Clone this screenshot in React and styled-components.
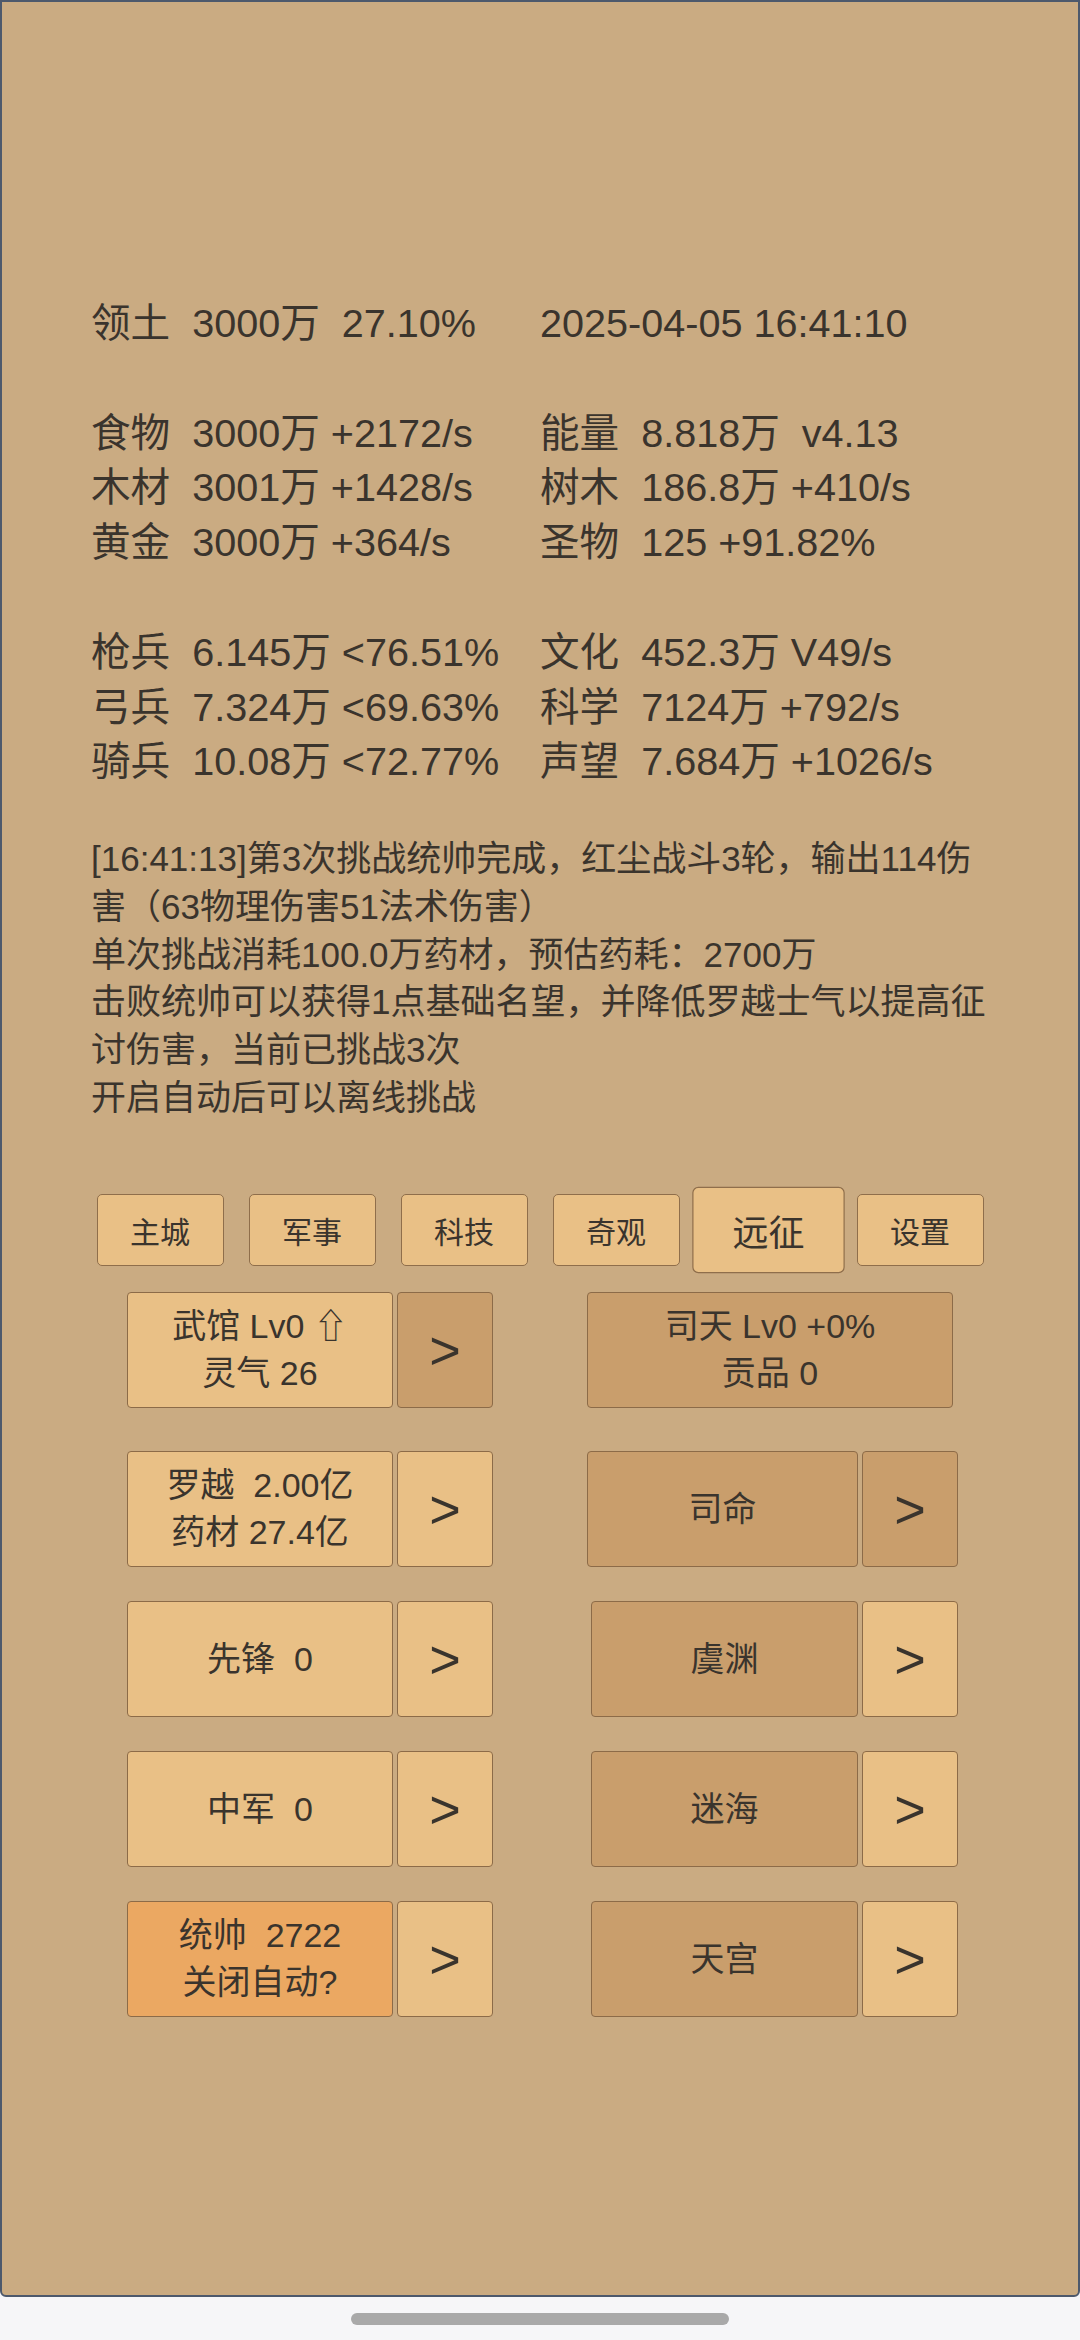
import styled, { createGlobalStyle } from "styled-components";

const Global = createGlobalStyle`
  html, body {
    margin: 0;
    padding: 0;
    background: #f6f6f8;
  }
  * { box-sizing: border-box; }
`;

const stats = [
  [["领土  3000万  27.10%", "2025-04-05 16:41:10"]],
  [
    ["食物  3000万 +2172/s", "能量  8.818万  v4.13"],
    ["木材  3001万 +1428/s", "树木  186.8万 +410/s"],
    ["黄金  3000万 +364/s", "圣物  125 +91.82%"],
  ],
  [
    ["枪兵  6.145万 <76.51%", "文化  452.3万 V49/s"],
    ["弓兵  7.324万 <69.63%", "科学  7124万 +792/s"],
    ["骑兵  10.08万 <72.77%", "声望  7.684万 +1026/s"],
  ],
];

const logLines = [
  "[16:41:13]第3次挑战统帅完成，红尘战斗3轮，输出114伤害（63物理伤害51法术伤害）",
  "单次挑战消耗100.0万药材，预估药耗：2700万",
  "击败统帅可以获得1点基础名望，并降低罗越士气以提高征讨伤害，当前已挑战3次",
  "开启自动后可以离线挑战",
];

const tabs = ["主城", "军事", "科技", "奇观", "远征", "设置"];

const rows = [
  {
    gap: 26,
    left: { lines: ["武馆 Lv0 ⇧", "灵气 26"], tone: "light", arrow: "dark" },
    right: { lines: ["司天 Lv0 +0%", "贡品 0"], tone: "dark", width: 366 },
  },
  {
    gap: 43,
    left: { lines: ["罗越  2.00亿", "药材 27.4亿"], tone: "light", arrow: "light" },
    right: { lines: ["司命"], tone: "dark", width: 271, arrow: "dark" },
  },
  {
    gap: 34,
    left: { lines: ["先锋  0"], tone: "light", arrow: "light" },
    right: { lines: ["虞渊"], tone: "dark", width: 267, arrow: "light" },
  },
  {
    gap: 34,
    left: { lines: ["中军  0"], tone: "light", arrow: "light" },
    right: { lines: ["迷海"], tone: "dark", width: 267, arrow: "light" },
  },
  {
    gap: 34,
    left: { lines: ["统帅  2722", "关闭自动?"], tone: "orange", arrow: "light" },
    right: { lines: ["天宫"], tone: "dark", width: 267, arrow: "light" },
  },
];

export default function App() {
  return (
    <>
      <Global />
      <Frame>
        <Stats>
          {stats.map((group, gi) => (
            <StatGroup key={gi} $first={gi === 0}>
              {group.map(([a, b], i) => (
                <StatRow key={i}>
                  <span>{a}</span>
                  <span>{b}</span>
                </StatRow>
              ))}
            </StatGroup>
          ))}
        </Stats>

        <Log>
          {logLines.map((l, i) => (
            <p key={i}>{l}</p>
          ))}
        </Log>

        <Tabs>
          {tabs.map((t) => (
            <Tab key={t} $active={t === "远征"}>
              {t}
            </Tab>
          ))}
        </Tabs>

        {rows.map((r, i) => (
          <BigRow key={i} $gap={r.gap}>
            <Group>
              <MainBtn $tone={r.left.tone} $w={266}>
                {r.left.lines.map((l) => (
                  <span key={l}>{l}</span>
                ))}
              </MainBtn>
              <ArrowBtn $tone={r.left.arrow}>&gt;</ArrowBtn>
            </Group>
            <RightGroup $alone={!r.right.arrow}>
              <MainBtn $tone={r.right.tone} $w={r.right.width}>
                {r.right.lines.map((l) => (
                  <span key={l}>{l}</span>
                ))}
              </MainBtn>
              {r.right.arrow && <ArrowBtn $tone={r.right.arrow}>&gt;</ArrowBtn>}
            </RightGroup>
          </BigRow>
        ))}
      </Frame>
      <HomeBar />
    </>
  );
}

const tones = {
  light: "#e9c086",
  dark: "#c99e6c",
  orange: "#eba862",
};

const Frame = styled.div`
  width: 1080px;
  height: 2297px;
  background: #caab82;
  border: 2px solid #4d596c;
  border-radius: 0 0 6px 6px;
  padding: 294px 89px 0;
  font-family: "Liberation Sans", "Noto Sans CJK SC", sans-serif;
  color: #3a342d;
  display: flex;
  flex-direction: column;
`;

const Stats = styled.div`
  font-size: 39.6px;
  line-height: 54.8px;
`;

const StatGroup = styled.div`
  margin-top: ${(p) => (p.$first ? 0 : 54.8)}px;
`;

const StatRow = styled.div`
  display: grid;
  grid-template-columns: 449px 1fr;
  white-space: pre;
`;

const Log = styled.div`
  margin: 46px -12px 0 0;
  font-size: 35px;
  line-height: 47.7px;

  p {
    margin: 0;
  }
`;

const Tabs = styled.div`
  margin-top: 73px;
  display: flex;
  justify-content: center;
  gap: 25px;
`;

const Tab = styled.div`
  width: 127px;
  height: 72px;
  display: flex;
  align-items: center;
  justify-content: center;
  background: #e9c086;
  border: 1.5px solid #8f6e4b;
  border-radius: 5px;
  font-size: 30px;
  transform: ${(p) => (p.$active ? "scale(1.2)" : "none")};
`;

const BigRow = styled.div`
  margin-top: ${(p) => p.$gap}px;
  padding-left: 36px;
  display: flex;
  gap: 94px;
`;

const Group = styled.div`
  display: flex;
  gap: 4px;
  width: 366px;
`;

const RightGroup = styled(Group)`
  width: 371px;
  justify-content: ${(p) => (p.$alone ? "flex-start" : "flex-end")};
`;

const MainBtn = styled.div`
  width: ${(p) => p.$w}px;
  height: 116px;
  display: flex;
  flex-direction: column;
  align-items: center;
  justify-content: center;
  background: ${(p) => tones[p.$tone]};
  border: 1.5px solid #8c6b48;
  border-radius: 4px;
  font-size: 34px;
  line-height: 47.6px;
  white-space: pre;
`;

const ArrowBtn = styled.div`
  width: 96px;
  height: 116px;
  display: flex;
  align-items: center;
  justify-content: center;
  background: ${(p) => tones[p.$tone]};
  border: 1.5px solid #8c6b48;
  border-radius: 4px;
  font-size: 54px;
  line-height: 1;
`;

const HomeBar = styled.div`
  width: 378px;
  height: 12px;
  margin: 16px auto 0;
  background: #a9a9a9;
  border-radius: 6px;
`;
